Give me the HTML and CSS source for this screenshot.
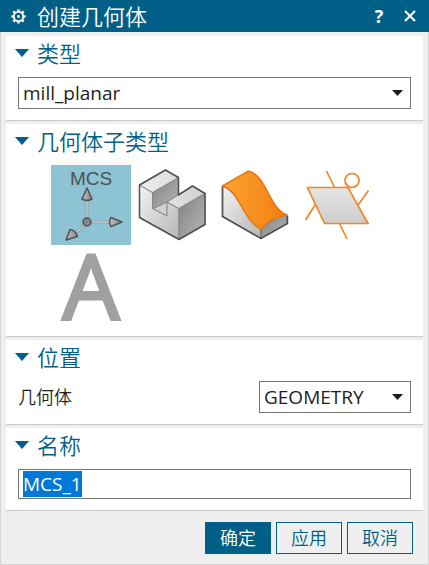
FILE: index.html
```html
<!DOCTYPE html>
<html lang="zh-CN">
<head>
<meta charset="utf-8">
<meta name="viewport" content="width=device-width, initial-scale=1">
<title>创建几何体</title>
<link rel="stylesheet" href="styles.css">
</head>
<body>
<main class="dialog">
  <header class="titlebar">
    <svg class="gear" viewBox="0 0 16 16" aria-hidden="true">
      <g fill="none" stroke="#fff">
        <circle cx="8" cy="8" r="5" stroke-width="2"/>
        <path stroke-width="2.6" d="M8 .5v2.500M8 13v2.500M.5 8h2.500M13 8h2.500M2.500 2.500l2 2M11.500 11.500l2 2M2.500 13.500l2-2M11.500 4.500l2-2"/>
      </g>
      <circle cx="8" cy="8" r="1.500" fill="#fff"/>
    </svg>
    <h1 class="title">创建几何体</h1>
    <button class="tool help" type="button" aria-label="帮助">?</button>
    <button class="tool" type="button" aria-label="关闭">
      <svg class="cross" viewBox="0 0 12 12"><path d="M1 1l10 10M11 1L1 11" stroke="#fff" stroke-width="2"/></svg>
    </button>
  </header>

  <form class="content">
    <section class="panel">
      <h2 class="heading"><svg class="caret" viewBox="0 0 14 8"><path d="M0 0h14L7 8z"/></svg><label for="type">类型</label></h2>
      <div class="combo">
        <select id="type" class="field"><option>mill_planar</option></select>
        <svg class="arrow" viewBox="0 0 11 6"><path d="M0 0h11L5.500 6z"/></svg>
      </div>
    </section>

    <section class="panel panel-icons">
      <h2 class="heading"><svg class="caret" viewBox="0 0 14 8"><path d="M0 0h14L7 8z"/></svg>几何体子类型</h2>
      <div class="subtypes">
        <button class="subtype selected" type="button" aria-label="MCS">
          <svg viewBox="0 0 80 80">
            <defs>
              <linearGradient id="cone"><stop offset="0" stop-color="#c2c2c2"/><stop offset="1" stop-color="#858585"/></linearGradient>
            </defs>
            <text class="mcs" x="40" y="20" text-anchor="middle">MCS</text>
            <path d="M36 52V34M41 57h18M33 60l-7 7" stroke="#858f93" stroke-width="2.500"/>
            <path d="M36 52V34M41 57h18M33 60l-7 7" stroke="#c3cdd0" stroke-width="1.500"/>
            <g fill="url(#cone)" stroke="#505456" stroke-width="1.500" stroke-linejoin="round">
              <path d="M36 23l5 11q-5 3-10 0z"/>
              <path d="M71 57l-11 4.500q-3-4.500 0-9z"/>
              <path d="M15 75l4-10.500q6 1 7.500 7z"/>
              <circle cx="36" cy="57" r="4" fill="#85888b"/>
            </g>
          </svg>
        </button>
        <button class="subtype" type="button" aria-label="工件">
          <svg viewBox="0 0 80 80">
            <defs>
              <linearGradient id="front" x1="0" y1="0" x2="1" y2="1"><stop offset="0" stop-color="#f3f3f3"/><stop offset="1" stop-color="#b5b5b5"/></linearGradient>
              <linearGradient id="side" x1="0" y1="0" x2="1" y2="1"><stop offset="0" stop-color="#808080"/><stop offset="1" stop-color="#b8b8b8"/></linearGradient>
              <linearGradient id="top" x1="0" y1="0" x2="1" y2="0"><stop offset="0" stop-color="#ededed"/><stop offset="1" stop-color="#d2d2d2"/></linearGradient>
            </defs>
            <g stroke-width="1" stroke="#858585" stroke-linejoin="round">
              <path fill="#d0d0d0" stroke="#a0a0a0" d="M18.500 43.500L33 36v15z"/>
              <path fill="url(#side)" d="M18.500 27.500l26-15V30L33 37l-14.500 7z"/>
              <path fill="url(#front)" d="M5.500 20l13 7.500V43.500L33 51V37l12 6.500v31l-39.500-22z"/>
              <path fill="url(#top)" d="M5.500 20l26-15 13 7.500-26 15zM33 37l25.500-16 12.500 7.500-26 15z"/>
              <path fill="url(#side)" d="M45 43.500l26-15v31l-26 15z"/>
            </g>
            <path fill="none" stroke="#505050" stroke-width="1.500" stroke-linejoin="round" d="M5.500 20l26-15 13 7.500V30l14-9L71 28.500v31l-26 15-39.500-22z"/>
          </svg>
        </button>
        <button class="subtype" type="button" aria-label="切削区域">
          <svg viewBox="0 0 80 80">
            <defs>
              <linearGradient id="orange"><stop offset="0" stop-color="#ffa431"/><stop offset="1" stop-color="#f07e12"/></linearGradient>
            </defs>
            <g stroke="#777" stroke-width="1.400" stroke-linejoin="round">
              <path fill="url(#front)" d="M5.500 21v30.500L44 73.500V64C28 56 23 26 5.500 21z"/>
              <path fill="url(#side)" d="M44 64q10-12 26-14v8.500l-26 15z"/>
            </g>
            <path fill="url(#orange)" stroke="#e87817" stroke-width="1.600" stroke-linejoin="round" d="M5.500 21l26-15C50 11 52 44 70 50q-16 2-26 14C26 56 23 26 5.500 21z"/>
            <path fill="none" stroke="#505050" stroke-width="1.500" d="M5.500 22v29.500l38.500 22 26.500-15V51"/>
          </svg>
        </button>
        <button class="subtype" type="button" aria-label="边界">
          <svg viewBox="0 0 80 80">
            <defs>
              <linearGradient id="plane" x1="0" y1="0" x2="0" y2="1"><stop offset="0" stop-color="#e4e4e4"/><stop offset="1" stop-color="#cdcdcd"/></linearGradient>
            </defs>
            <g fill="none" stroke="#ee862b" stroke-width="1.700">
              <path fill="url(#plane)" d="M7.500 22.500H48l20 36H24.500z"/>
              <circle cx="52" cy="15.500" r="7"/>
              <path d="M26.500 6l8 16.500M68.500 25.500L58 40M15.500 39.500L5.500 55M39.500 58.500L47 74M46 18l2 5"/>
            </g>
          </svg>
        </button>
        <button class="subtype" type="button" aria-label="文字">
          <svg viewBox="0 0 80 80"><text class="letter" x="40" y="71" text-anchor="middle">A</text></svg>
        </button>
      </div>
    </section>

    <section class="panel">
      <h2 class="heading"><svg class="caret" viewBox="0 0 14 8"><path d="M0 0h14L7 8z"/></svg>位置</h2>
      <div class="row">
        <label for="geometry">几何体</label>
        <div class="combo combo-short">
          <select id="geometry" class="field"><option>GEOMETRY</option></select>
          <svg class="arrow" viewBox="0 0 11 6"><path d="M0 0h11L5.500 6z"/></svg>
        </div>
      </div>
    </section>

    <section class="panel">
      <h2 class="heading"><svg class="caret" viewBox="0 0 14 8"><path d="M0 0h14L7 8z"/></svg><label for="name">名称</label></h2>
      <input id="name" class="field field-text" type="text" value="MCS_1">
    </section>

    <footer class="actions">
      <button class="btn primary" type="submit">确定</button>
      <button class="btn" type="button">应用</button>
      <button class="btn" type="button">取消</button>
    </footer>
  </form>
</main>
<script src="script.js"></script>
</body>
</html>
```
FILE: styles.css
```css
* {
  box-sizing: border-box;
}

body {
  margin: 0;
  background: #efefef;
  color: #1e1e1e;
  font: 350 18px/24px "Open Sans", "Noto Sans CJK SC", sans-serif;
}

button,
input,
select {
  font: inherit;
  color: inherit;
}

svg {
  display: block;
  overflow: visible;
}

.dialog {
  min-height: 100vh;
  background: #efefef;
  border: 1px solid #d5d5d5;
  border-top: 0;
}

.titlebar {
  display: flex;
  align-items: center;
  height: 32px;
  margin: 0 -1px;
  padding: 0 9px 0 11px;
  background: #005f87;
  color: #fff;
}

.gear {
  width: 15px;
  height: 15px;
}

.title {
  flex: 1;
  margin: 0 0 0 11px;
  font-size: 22px;
  line-height: 32px;
  font-weight: 350;
}

.tool {
  display: grid;
  place-items: center;
  width: 20px;
  height: 32px;
  margin-left: 11px;
  padding: 0;
  border: 0;
  background: none;
  color: #fff;
}

.help {
  font-weight: 700;
}

.cross {
  width: 12px;
  height: 12px;
}

.content {
  display: flex;
  flex-direction: column;
  gap: 3px;
  padding: 4px 5px 10px;
}

.panel {
  padding: 0 12px 11px;
  background: #fff;
  border-bottom: 1px solid #c8c8c8;
}

.panel-icons {
  padding-bottom: 8px;
}

.heading {
  display: flex;
  align-items: center;
  gap: 8px;
  margin: 0 0 7px -3px;
  color: #005f87;
  font-size: 22px;
  line-height: 34px;
  font-weight: 350;
}

.caret {
  width: 14px;
  height: 8px;
  fill: #005f87;
}

.combo {
  position: relative;
}

.combo-short {
  width: 152px;
}

.field {
  display: block;
  width: 100%;
  height: 32px;
  padding: 0 4px;
  border: 1px solid #767676;
  border-radius: 0;
  background: #fff;
  font-size: 19px;
  font-weight: 400;
  appearance: none;
  outline: 0;
}

.field-text {
  height: 30px;
}

.field-text::selection {
  background: #0078d7;
  color: #fff;
}

.arrow {
  position: absolute;
  top: 13px;
  right: 8px;
  width: 11px;
  height: 6px;
  fill: #1e1e1e;
  pointer-events: none;
}

.row {
  display: flex;
  align-items: center;
  justify-content: space-between;
}

.subtypes {
  display: grid;
  grid-template-columns: repeat(auto-fill, 80px);
  gap: 3px;
  padding: 0 0 0 33px;
}

.subtype {
  width: 80px;
  height: 80px;
  padding: 0;
  border: 0;
  background: none;
}

.selected {
  background: #8dc3d3;
}

.mcs {
  font: 19px "Liberation Sans", sans-serif;
  fill: #4b5356;
}

.letter {
  font: 90px "Open Sans", sans-serif;
  fill: #a0a0a0;
  stroke: #a0a0a0;
  stroke-width: 3px;
}

.actions {
  display: flex;
  justify-content: flex-end;
  gap: 5px;
  padding: 8px 10px 0;
}

.btn {
  width: 66px;
  height: 32px;
  padding: 0;
  border: 1px solid #005f87;
  background: #efefef;
  color: #005f87;
}

.primary {
  background: #005f87;
  color: #fff;
}
```
FILE: script.js
```js
const nameField = document.getElementById("name");
nameField.focus();
nameField.select();
```
